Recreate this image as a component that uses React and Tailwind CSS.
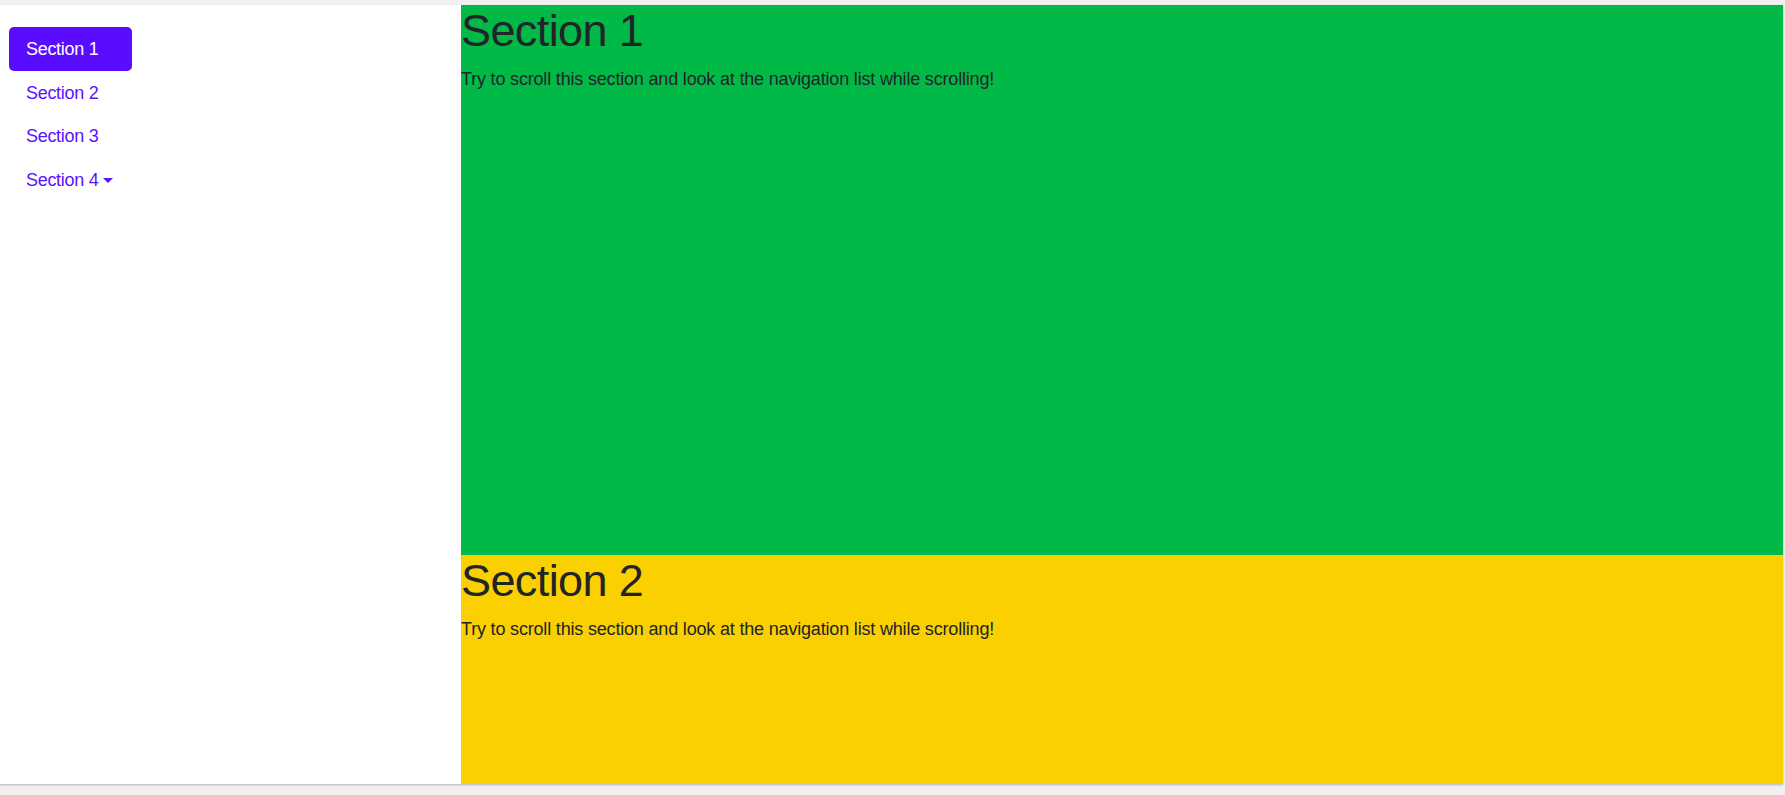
export default function App() {
  const links = ["Section 1", "Section 2", "Section 3", "Section 4"];
  return (
    <div className="h-[795px] w-[1785px] overflow-hidden bg-[#f0f0f0] pt-[5px] font-['Liberation_Sans',Arial,sans-serif]">
      <div className="flex h-[779px] w-[1783px] bg-white shadow-[0_1px_2px_rgba(0,0,0,0.25)]">
        <aside className="w-[461px] shrink-0 bg-white pl-[9px] pt-[22px]">
          <nav className="flex w-fit flex-col">
            {links.map((l, i) => (
              <a
                key={l}
                className={
                  "flex h-[43.6px] items-center rounded-[5px] pl-[17px] pr-[19px] pt-[2px] text-[18px] leading-[27px] tracking-[-0.3px] " +
                  (i === 0 ? "bg-[#5a0cff] text-white" : "text-[#5a12ff]")
                }
              >
                {l}
                {i === 3 && (
                  <span className="ml-[5px] inline-block h-0 w-0 border-x-[5px] border-t-[5px] border-x-transparent border-t-[#5a12ff]" />
                )}
              </a>
            ))}
          </nav>
        </aside>
        <main className="flex min-w-0 flex-1 flex-col overflow-hidden text-[#212529]">
          <section className="h-[550px] shrink-0 bg-[#00b946]">
            <h1 className="text-[45px] leading-[52px] tracking-[-0.6px]">Section 1</h1>
            <p className="mt-[9px] text-[18px] leading-[27px] tracking-[-0.18px]">Try to scroll this section and look at the navigation list while scrolling!</p>
          </section>
          <section className="flex-1 bg-[#fad000]">
            <h1 className="text-[45px] leading-[52px] tracking-[-0.6px]">Section 2</h1>
            <p className="mt-[9px] text-[18px] leading-[27px] tracking-[-0.18px]">Try to scroll this section and look at the navigation list while scrolling!</p>
          </section>
        </main>
      </div>
    </div>
  );
}
